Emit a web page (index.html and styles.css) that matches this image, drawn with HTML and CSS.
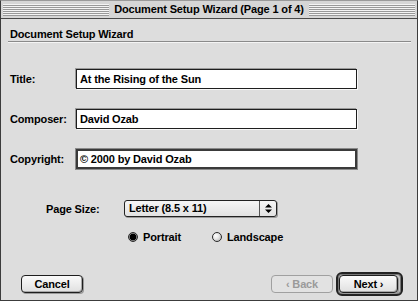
FILE: index.html
```html
<!DOCTYPE html>
<html>
<head>
<meta charset="utf-8">
<link rel="stylesheet" href="styles.css">
</head>
<body>
<div class="window">
  <div class="titlebar">
    <div class="stripes"></div>
    <div class="title">Document Setup Wizard (Page 1 of 4)</div>
    <div class="stripes"></div>
  </div>
  <div class="content">
    <div class="header">Document Setup Wizard</div>
    <div class="fields">
      <div class="field"><span class="label">Title:</span><div class="edit">At the Rising of the Sun</div></div>
      <div class="field"><span class="label">Composer:</span><div class="edit">David Ozab</div></div>
      <div class="field"><span class="label">Copyright:</span><div class="edit focus">© 2000 by David Ozab</div></div>
    </div>
    <div class="pagesize">
      <span class="plabel">Page Size:</span>
      <div class="popup">
        <span class="ptext">Letter (8.5 x 11)</span>
        <span class="parrow"><svg width="7" height="9" viewBox="0 0 7 9"><path d="M3.5 0 L7 3.5 H0 Z M0 5.5 H7 L3.5 9 Z" fill="#000"/></svg></span>
      </div>
    </div>
    <div class="orient">
      <div class="radio-item first"><span class="radio on"></span><span>Portrait</span></div>
      <div class="radio-item"><span class="radio"></span><span>Landscape</span></div>
    </div>
    <div class="buttons">
      <div class="btn cancel">Cancel</div>
      <div class="spacer"></div>
      <div class="btn disabled">‹ Back</div>
      <div class="defring"><div class="btn next">Next ›</div></div>
    </div>
  </div>
</div>
</body>
</html>
```
FILE: styles.css
```css
html, body {
  margin: 0;
  padding: 0;
  background: #ffffff;
}
body {
  font-family: "Liberation Sans", Arial, sans-serif;
  font-weight: bold;
  font-size: 11px;
  letter-spacing: -0.15px;
  color: #000;
}
.window {
  width: 418px;
  height: 301px;
  box-sizing: border-box;
  border: 1px solid #3c3c3c;
  border-top-color: #9a9a9a;
  background: #dddddd;
  display: flex;
  flex-direction: column;
}
.titlebar {
  height: 17px;
  border-bottom: 1px solid #4a4a4a;
  background: #d6d6d6;
  display: flex;
  align-items: center;
  padding: 0 2px 0 2px;
}
.stripes {
  flex: 1;
  height: 12px;
  background: repeating-linear-gradient(to bottom, #f4f4f4 0 1px, #999999 1px 2px);
}
.title {
  padding: 0 5px;
  line-height: 17px;
  white-space: nowrap;
}
.content {
  flex: 1;
  display: flex;
  flex-direction: column;
  padding: 0 6px 0 7px;
}
.header {
  margin-top: 9px;
  padding-left: 2px;
  line-height: 13px;
  border-bottom: 1px solid #8a8a8a;
  box-shadow: 0 1px 0 #f4f4f4;
}
.fields {
  margin-top: 27px;
  display: flex;
  flex-direction: column;
  gap: 20px;
}
.field {
  display: flex;
  align-items: center;
  height: 20px;
  padding-left: 2px;
}
.label {
  width: 66px;
}
.edit {
  width: 281px;
  height: 20px;
  box-sizing: border-box;
  border: 1px solid #1e1e1e;
  background: #fff;
  padding-left: 3px;
  line-height: 18px;
  box-shadow: -1px -1px 0 #9a9a9a, 1px 1px 0 #f8f8f8;
}
.edit.focus {
  border: 2px solid #3a3a3a;
  padding-left: 2px;
  line-height: 16px;
  box-shadow: 0 0 0 1px #8a8a8a;
}
.pagesize {
  margin-top: 31px;
  display: flex;
  align-items: center;
  height: 17px;
  padding-left: 38px;
}
.plabel {
  width: 78px;
}
.popup {
  width: 153px;
  height: 17px;
  box-sizing: border-box;
  border: 1px solid #222;
  border-radius: 3px;
  background: linear-gradient(#f6f6f6, #e2e2e2);
  box-shadow: 1px 1px 0 #9a9a9a;
  display: flex;
  align-items: center;
}
.ptext {
  flex: 1;
  padding-left: 4px;
  line-height: 15px;
}
.parrow {
  width: 16px;
  height: 15px;
  border-left: 1px solid #555;
  display: flex;
  align-items: center;
  justify-content: center;
}
.parrow svg {
  display: block;
}
.orient {
  margin-top: 13px;
  height: 13px;
  display: flex;
  align-items: center;
  padding-left: 120px;
}
.radio-item {
  display: flex;
  align-items: center;
  gap: 5px;
}
.radio-item.first {
  width: 84px;
}
.radio {
  width: 10px;
  height: 10px;
  box-sizing: border-box;
  border-radius: 50%;
  border: 1px solid #2a2a2a;
  background: radial-gradient(circle at 35% 35%, #ffffff 0, #e8e8e8 40%, #a8a8a8 100%);
}
.radio.on {
  background: radial-gradient(circle at 50% 50%, #000 0 3px, #7a7a7a 3.5px, #c0c0c0 100%);
}
.buttons {
  margin-top: 29px;
  height: 24px;
  display: flex;
  align-items: center;
  padding-left: 13px;
}
.spacer {
  flex: 1;
}
.btn {
  width: 62px;
  height: 18px;
  box-sizing: border-box;
  border: 1px solid #1e1e1e;
  border-radius: 4px;
  background: linear-gradient(#fafafa, #e0e0e0);
  box-shadow: inset -1px -1px 0 #a8a8a8, 1px 1px 0 #9a9a9a;
  text-align: center;
  line-height: 16px;
}
.btn.disabled {
  color: #9a9a9a;
  border-color: #a0a0a0;
  background: #e2e2e2;
  box-shadow: none;
  margin-right: 3px;
}
.defring {
  width: 67px;
  height: 24px;
  box-sizing: border-box;
  border: 2px solid #222;
  border-radius: 6px;
  padding: 1px;
  margin-right: 8px;
  background: #c8c8c8;
  box-shadow: inset 0 0 0 1px #777;
}
.btn.next {
  width: 59px;
}
```
